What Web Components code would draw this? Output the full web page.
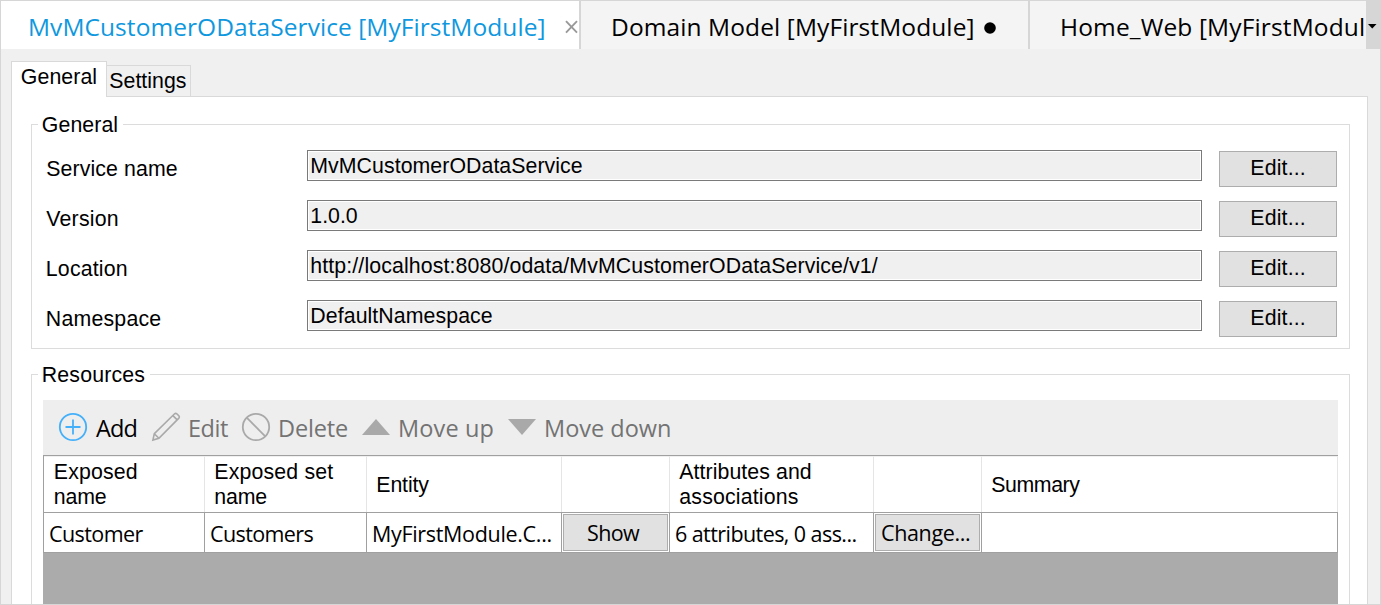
<!DOCTYPE html>
<html lang="en">
<head>
<meta charset="utf-8">
<title>MvMCustomerODataService</title>
<style>
  html, body { margin: 0; height: 100%; overflow: hidden; }
  body { font-family: "Liberation Sans", Arial, sans-serif; font-size: 21.3px; color: #000; }
</style>
</head>
<body>
<service-editor></service-editor>
<script>
const define = (name, html, setup) => {
  const tpl = document.createElement('template');
  tpl.innerHTML = html;
  customElements.define(name, class extends HTMLElement {
    connectedCallback() {
      if (this.shadowRoot) return;
      this.attachShadow({ mode: 'open' }).append(tpl.content.cloneNode(true));
      if (setup) setup(this, this.shadowRoot);
    }
  });
};

/* One line of text tracked so that its glyphs span exactly `w` pixels. */
const ctx = document.createElement('canvas').getContext('2d');
define('ui-text', `
  <style>
    :host { display: block; white-space: nowrap; line-height: 27px; height: 25px; }
    :host([face=segoe]) { font-family: "Open Sans", "Noto Sans", sans-serif; line-height: 33px; height: 33px; }
  </style><slot></slot>`, el => {
  const size = el.getAttribute('size');
  if (size) el.style.fontSize = size + 'px';
  const w = +el.getAttribute('w');
  if (!w) return;
  const cs = getComputedStyle(el), text = el.textContent;
  ctx.font = cs.fontSize + ' ' + cs.fontFamily;
  const m = ctx.measureText(text);
  const ink = m.actualBoundingBoxLeft + m.actualBoundingBoxRight;
  el.style.letterSpacing = ((w - .5 - ink) / (text.length - 1)).toFixed(3) + 'px';
  el.style.textIndent = (m.actualBoundingBoxLeft + (size ? 0 : .3)).toFixed(2) + 'px';
});

define('doc-tab', `
  <style>
    :host { display: flex; box-sizing: border-box; height: 48px; padding: 9px 0 0 30px; background: #f4f4f4;
            border-right: 2px solid #d6d6d6; overflow: hidden; flex: none; }
    :host([active]) { background: #fff; color: #0f98de; }
    :host([last]) { border-right: 0; }
  </style><slot></slot>`);

define('doc-tabs', `
  <style>
    :host { display: flex; height: 48px; }
    .t1 { width: 580px; padding-left: 29px; } .t2 { width: 449px; padding-left: 32px; } .t3 { width: 336px; padding-left: 32px; }
    .t1 ui-text { width: 516px; } .t2 ui-text { width: 362px; }
    svg { display: block; flex: none; }
    .x { margin: 10px 0 0 18.500px; } .dot { margin: 12px 0 0 9px; }
    .more { width: 14px; background: #d6d6d6; padding: 23px 0 0 2px; box-sizing: border-box; }
  </style>
  <doc-tab class="t1" active><ui-text face="segoe" size="24.5" w="515">MvMCustomerODataService [MyFirstModule]</ui-text>
    <svg class="x" width="13" height="14" viewBox="0 0 13 14"><path d="M1 1.200 12 12.600M12 1.200 1 12.600" stroke="#999" stroke-width="1.900" fill="none"/></svg></doc-tab>
  <doc-tab class="t2"><ui-text face="segoe" size="24.5" w="361">Domain Model [MyFirstModule]</ui-text>
    <svg class="dot" width="12" height="12"><circle cx="6" cy="6" r="5.800"/></svg></doc-tab>
  <doc-tab class="t3" last><ui-text face="segoe" size="24.5" w="302.500">Home_Web [MyFirstModul</ui-text></doc-tab>
  <div class="more"><svg width="9" height="5"><path d="M0 0H8.500L4.250 4.500Z"/></svg></div>`);

define('page-tabs', `
  <style>
    :host { display: flex; align-items: flex-end; height: 48px; padding-left: 10px; }
    div { box-sizing: border-box; border: 1px solid #d9d9d9; border-bottom: 0; }
    .on { width: 96px; height: 36px; background: #fff; padding: 2px 0 0 9.500px; }
    .off { width: 84px; height: 31px; background: #f0f0f0; border-left: 0; padding: 2px 0 0 2px; margin-bottom: 1px; }
  </style>
  <div class="on"><ui-text w="75">General</ui-text></div>
  <div class="off"><ui-text w="77">Settings</ui-text></div>`);

define('group-box', `
  <style>
    :host { display: flex; flex-direction: column; box-sizing: border-box; border: 1px solid #dcdcdc; }
    .legend { background: #fff; align-self: flex-start; margin: -13px 0 0 6px; padding: 0 5px 0 4.500px; }
  </style>
  <div class="legend"></div><slot></slot>`, (el, root) => {
  const t = document.createElement('ui-text');
  t.textContent = el.getAttribute('label');
  t.setAttribute('w', el.getAttribute('lw'));
  root.querySelector('.legend').append(t);
});

define('push-button', `
  <style>
    :host { display: block; box-sizing: border-box; background: #e1e1e1; border: 1px solid #adadad; }
  </style><slot></slot>`);

define('form-row', `
  <style>
    :host { display: grid; grid-template-columns: 261px 895px 118px; column-gap: 0; height: 50px; align-items: start; }
    .label { padding-top: 6px; }
    .field { box-sizing: border-box; height: 31px; border: 1px solid #7a7a7a; background: #f0f0f0;
             box-shadow: inset 0 0 0 1px #fff; padding: 2px 0 0 3px; }
    push-button { margin: 1px 0 0 17px; width: 118px; height: 36px; padding: 3px 0 0 31px; }
  </style>
  <div class="label"><slot name="label"></slot></div>
  <div class="field"><slot></slot></div>
  <push-button><ui-text w="53">Edit...</ui-text></push-button>`);

define('tool-bar', `
  <style>
    :host { display: flex; height: 55px; background: #eee; color: #737373; box-sizing: border-box; padding: 11px 0 0 15px; }
    svg { display: block; margin-top: 1px; overflow: visible; flex: none; fill: none; stroke: #a9a9a9; stroke-width: 1.800; }
    .s { stroke: none; fill: #a9a9a9; }
    ui-text { margin: 1px 0 0 10px; flex: none; }
    .a { color: #000; width: 46px; margin-left: 8px; } .e { width: 42px; } .d { width: 72px; } .u { width: 98px; }
  </style>
  <svg width="30" height="30" viewBox="0 0 30 30" style="stroke:#44b0fa"><circle cx="15" cy="15" r="13.200"/><path d="M15 7.500v15M7.500 15h15"/></svg>
  <ui-text class="a" face="segoe" size="23.5" w="41">Add</ui-text>
  <svg width="28" height="30" viewBox="0 0 28 30" style="margin-left:10px"><path d="M.9 28.100 2.300 21.700 22.600 1.800Q23.700.9 24.800 1.800L27 4Q27.800 5.100 26.900 6.100L6.900 26.300ZM20.900 3.600 25.200 7.900M2.300 21.700 6.900 26.300" stroke-width="1.600"/></svg>
  <ui-text class="e" face="segoe" size="23.5" w="38.500">Edit</ui-text>
  <svg width="30" height="30" viewBox="0 0 30 30" style="margin-left:9px"><circle cx="15" cy="15" r="13.200"/><path d="M5.700 5.700 24.300 24.300"/></svg>
  <ui-text class="d" style="margin-left:9px" face="segoe" size="23.5" w="67.500">Delete</ui-text>
  <svg class="s" width="28" height="30" viewBox="0 0 28 30" style="margin-left:10px"><path d="M0 23 14 7 28 23Z"/></svg>
  <ui-text class="u" face="segoe" size="23.5" w="94">Move up</ui-text>
  <svg class="s" width="28" height="30" viewBox="0 0 28 30" style="margin-left:10px"><path d="M0 7H28L14 23Z"/></svg>
  <ui-text face="segoe" size="23.5" w="124.500">Move down</ui-text>`);

define('resource-grid', `
  <style>
    :host { display: flex; flex-direction: column; flex: 1; min-height: 0; background: #ababab; border-top: 1px solid #a0a0a0; }
    .row { display: grid; grid-template-columns: 161px 162px 195px 108px 204px 108px 356px; background: #fff;
           border-left: 1px solid #a0a0a0; border-bottom: 1px solid #a0a0a0; flex: none; }
    .row > div { box-sizing: border-box; border-right: 1px solid #a0a0a0; overflow: hidden; }
    .head { height: 56px; }
    .head > div { border-right-color: #e5e5e5; border-top: 1px solid #f0f0f0; padding: 2px 0 0 10.500px; }
    .head > .one { padding-top: 15px; padding-left: 10px; }
    .body { height: 39px; }
    .body > div { padding: 4px 0 0 6px; }
    .body > .b { padding: 1px; }
    push-button { height: 37px; padding-top: 1px; }
  </style>
  <div class="row head">
    <div><ui-text w="82.500">Exposed</ui-text><ui-text w="51.500">name</ui-text></div>
    <div style="padding-left:10px"><ui-text w="118.500">Exposed set</ui-text><ui-text w="51.500">name</ui-text></div>
    <div class="one"><ui-text w="52.500">Entity</ui-text></div><div></div>
    <div style="padding-left:9px"><ui-text w="132">Attributes and</ui-text><ui-text w="119">associations</ui-text></div><div></div>
    <div class="one" style="padding-left:9px"><ui-text w="89.500">Summary</ui-text></div>
  </div>
  <div class="row body">
    <div><ui-text face="segoe" size="21.5" w="94">Customer</ui-text></div>
    <div><ui-text face="segoe" size="21.5" w="103">Customers</ui-text></div>
    <div style="padding-left:7px"><ui-text face="segoe" size="21.5" w="178">MyFirstModule.C...</ui-text></div>
    <div class="b"><push-button style="padding-left:24px"><ui-text face="segoe" size="21.5" w="52.500">Show</ui-text></push-button></div>
    <div><ui-text face="segoe" size="21.5" w="181">6 attributes, 0 ass...</ui-text></div>
    <div class="b"><push-button style="padding-left:6px"><ui-text face="segoe" size="21.5" w="88.500">Change...</ui-text></push-button></div>
    <div></div>
  </div>`);

define('service-editor', `
  <style>
    :host { display: flex; flex-direction: column; box-sizing: border-box; width: 1381px; height: 605px;
            border: 1px solid #d6d6d6; background: #f0f0f0; overflow: hidden; }
    .panel { flex: 1; min-height: 0; box-sizing: border-box; margin: -1px 12px 0 10px; background: #fff; border: 1px solid #d9d9d9;
             border-bottom: 0; padding: 27px 17px 0 19px; display: flex; flex-direction: column; gap: 25px; }
    page-tabs { z-index: 1; }
    .form { height: 225px; flex: none; }
    .rows { padding: 13px 0 0 14px; }
    .res { flex: 1; min-height: 0; border-bottom: 0; }
    .inner { display: flex; flex-direction: column; flex: 1; min-height: 0; margin: 13px 11px 0 11px; }
  </style>
  <doc-tabs></doc-tabs>
  <page-tabs></page-tabs>
  <div class="panel">
    <group-box class="form" label="General" lw="75"><div class="rows">
      <form-row><ui-text slot="label" w="131">Service name</ui-text><ui-text w="271">MvMCustomerODataService</ui-text></form-row>
      <form-row><ui-text slot="label" w="72">Version</ui-text><ui-text w="47">1.0.0</ui-text></form-row>
      <form-row><ui-text slot="label" style="padding-left:.500px" w="80.500">Location</ui-text><ui-text w="567">http://localhost:8080/odata/MvMCustomerODataService/v1/</ui-text></form-row>
      <form-row><ui-text slot="label" style="padding-left:.500px" w="114">Namespace</ui-text><ui-text w="181">DefaultNamespace</ui-text></form-row>
    </div></group-box>
    <group-box class="res" label="Resources" lw="102"><div class="inner">
      <tool-bar></tool-bar>
      <resource-grid></resource-grid>
    </div></group-box>
  </div>`);
</script>
</body>
</html>
